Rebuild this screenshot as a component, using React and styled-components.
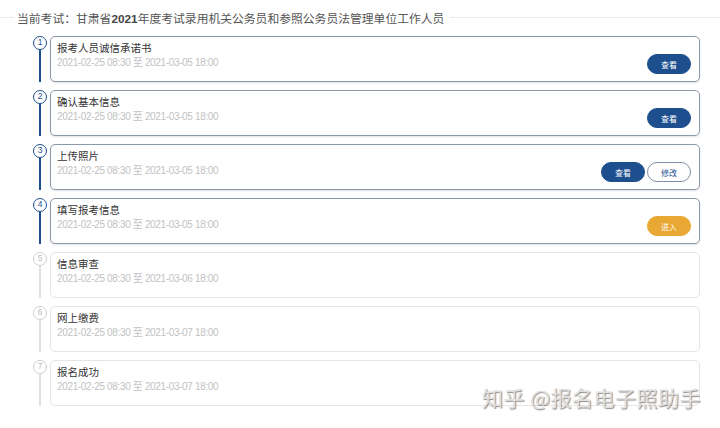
import React from "react";
import styled, { createGlobalStyle } from "styled-components";

const GlobalStyle = createGlobalStyle`
  body {
    margin: 0;
    background: #fff;
    font-family: "Liberation Sans", "Noto Sans CJK SC", sans-serif;
  }
`;

const Page = styled.div`
  position: relative;
  width: 720px;
  height: 428px;
  padding-right: 20px;
  box-sizing: border-box;
  overflow: hidden;
`;

const Legend = styled.div`
  display: flex;
  align-items: center;
  height: 34px;
  margin-right: -20px;

  &::before,
  &::after {
    content: "";
    height: 1px;
    background: #ebebeb;
  }
  &::before {
    width: 14px;
    margin-right: 3px;
  }
  &::after {
    flex: 1;
    margin-left: 6px;
  }
`;

const LegendText = styled.span`
  font-family: "Noto Sans CJK SC", sans-serif;
  font-size: 11.8px;
  color: #555;

  b {
    font-family: "Liberation Sans", sans-serif;
    font-weight: bold;
    color: #444;
  }
`;

const Steps = styled.div`
  margin-top: 2px;
  display: flex;
  flex-direction: column;
`;

const Step = styled.div`
  display: flex;
  align-items: stretch;
  padding-bottom: ${(p) => (p.last ? "9px" : "8px")};
`;

const Rail = styled.div`
  width: 16px;
  margin-left: 32px;
  display: flex;
  flex-direction: column;
  align-items: center;
`;

const Dot = styled.div`
  width: 14px;
  height: 14px;
  margin-top: 0;
  box-sizing: border-box;
  border-radius: 50%;
  border: 1.5px solid ${(p) => (p.active ? "#1d4f8f" : "#cfcfcf")};
  background: #fff;
  color: ${(p) => (p.active ? "#1d4f8f" : "#bbb")};
  font-size: 8.5px;
  line-height: 11px;
  text-align: center;
  flex-shrink: 0;
`;

const Line = styled.div`
  flex: 1;
  width: 2.5px;
  background: ${(p) => (p.active ? "#1d4f8f" : "#e0e0e0")};
`;

const Card = styled.div`
  flex: 1;
  margin-left: 2px;
  height: 46px;
  box-sizing: border-box;
  border: 1px solid ${(p) => (p.active ? "#8a98aa" : "#e6e6e6")};
  border-radius: 5px;
  box-shadow: ${(p) => (p.active ? "0 1px 2px rgba(0,0,0,0.12)" : "none")};
  display: flex;
  justify-content: space-between;
  align-items: flex-end;
  padding: 3px 8px 7px 6px;
`;

const Info = styled.div`
  align-self: flex-start;
  display: flex;
  flex-direction: column;
`;

const Title = styled.div`
  font-family: "Noto Sans CJK SC", sans-serif;
  font-size: 10.5px;
  line-height: 16px;
  color: #333;
`;

const Time = styled.div`
  font-family: "Liberation Sans", "Noto Sans CJK SC", sans-serif;
  font-size: 10px;
  letter-spacing: -0.35px;
  line-height: 13px;
  color: #c2c2c2;
`;

const Actions = styled.div`
  display: flex;
  gap: 2px;
`;

const Button = styled.button`
  width: 44px;
  height: 20px;
  border-radius: 10px;
  font-family: "Noto Sans CJK SC", sans-serif;
  font-size: 8px;
  padding: 0;
  cursor: pointer;
  border: 1px solid
    ${(p) =>
      p.variant === "outline" ? "#7d8fa6" : p.variant === "warn" ? "#e9a833" : "#1d4f8f"};
  background: ${(p) =>
    p.variant === "outline" ? "#fff" : p.variant === "warn" ? "#e9a833" : "#1d4f8f"};
  color: ${(p) => (p.variant === "outline" ? "#1d4f8f" : "#fff")};
`;

const Watermark = styled.div`
  position: absolute;
  right: 19px;
  bottom: 16px;
  font-family: "Noto Sans CJK SC", sans-serif;
  font-size: 21px;
  color: #e0e0e0;
  text-shadow: 1px 1px 1px rgba(0, 0, 0, 0.45);
  letter-spacing: 0.5px;
`;

const steps = [
  { title: "报考人员诚信承诺书", end: "2021-03-05 18:00", active: true, actions: [["查看"]] },
  { title: "确认基本信息", end: "2021-03-05 18:00", active: true, actions: [["查看"]] },
  { title: "上传照片", end: "2021-03-05 18:00", active: true, actions: [["查看"], ["修改", "outline"]] },
  { title: "填写报考信息", end: "2021-03-05 18:00", active: true, actions: [["进入", "warn"]] },
  { title: "信息审查", end: "2021-03-06 18:00", active: false, actions: [] },
  { title: "网上缴费", end: "2021-03-07 18:00", active: false, actions: [] },
  { title: "报名成功", end: "2021-03-07 18:00", active: false, actions: [] },
];

const App = () => {
  return (
    <Page>
      <GlobalStyle />
      <Legend>
        <LegendText>
          当前考试：甘肃省<b>2021</b>年度考试录用机关公务员和参照公务员法管理单位工作人员
        </LegendText>
      </Legend>
      <Steps>
        {steps.map((step, i) => (
          <Step key={step.title} last={i === steps.length - 1}>
            <Rail>
              <Dot active={step.active}>{i + 1}</Dot>
              <Line active={step.active} />
            </Rail>
            <Card active={step.active}>
              <Info>
                <Title>{step.title}</Title>
                <Time>2021-02-25 08:30 至 {step.end}</Time>
              </Info>
              <Actions>
                {step.actions.map(([label, variant]) => (
                  <Button key={label} variant={variant}>
                    {label}
                  </Button>
                ))}
              </Actions>
            </Card>
          </Step>
        ))}
      </Steps>
      <Watermark>知乎 @报名电子照助手</Watermark>
    </Page>
  );
};

export default App;
